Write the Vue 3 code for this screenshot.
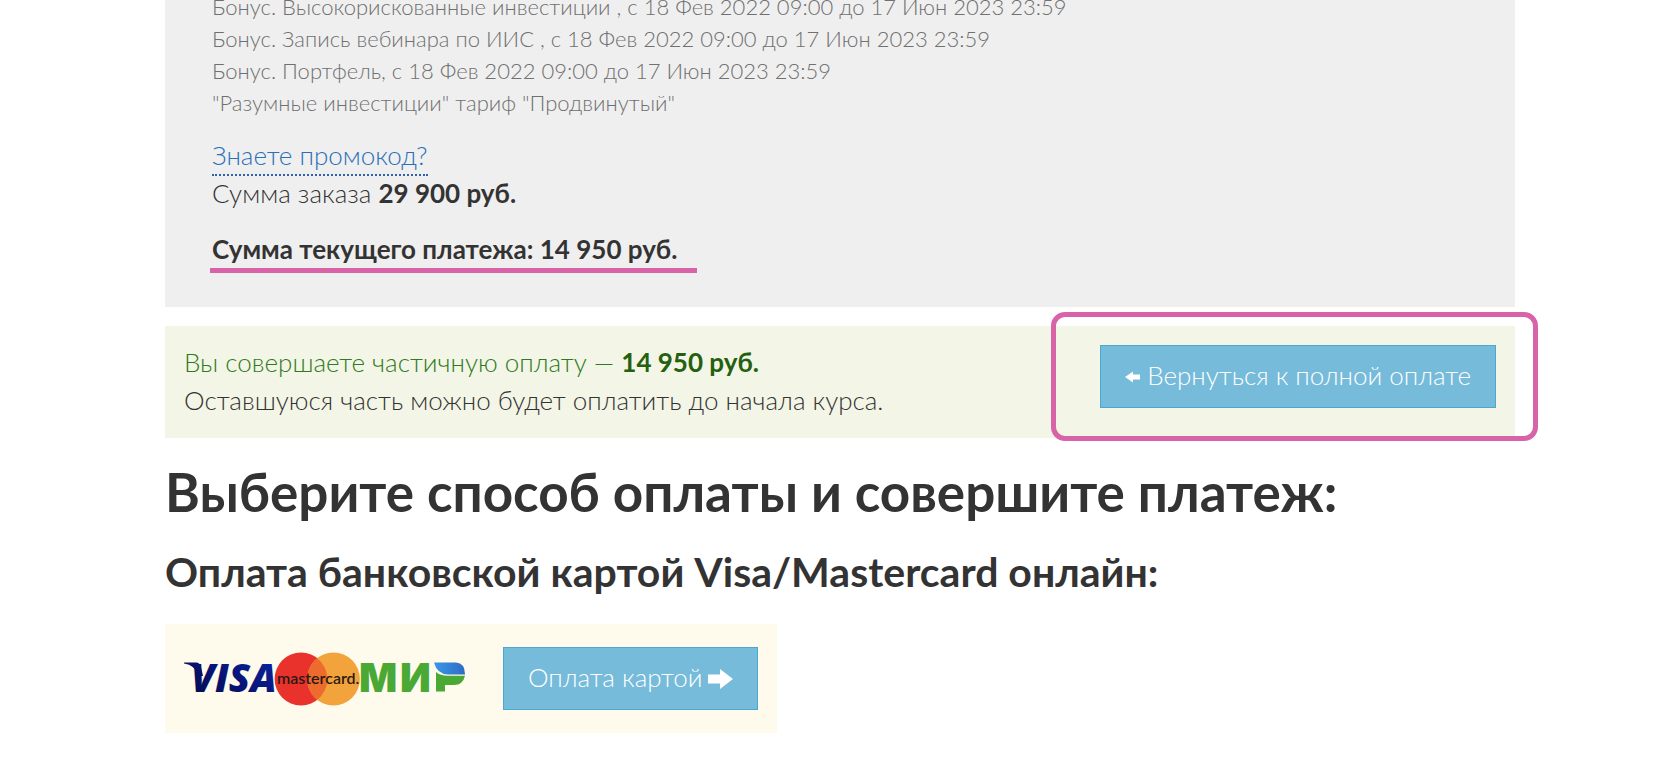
<script setup>
const items = [
  'Бонус. Высокорискованные инвестиции , с 18 Фев 2022 09:00 до 17 Июн 2023 23:59',
  'Бонус. Запись вебинара по ИИС , с 18 Фев 2022 09:00 до 17 Июн 2023 23:59',
  'Бонус. Портфель, с 18 Фев 2022 09:00 до 17 Июн 2023 23:59',
  '"Разумные инвестиции" тариф "Продвинутый"',
]
</script>

<template>
  <main class="page">
    <section class="order">
      <ul class="items">
        <li v-for="item in items" :key="item">{{ item }}</li>
      </ul>
      <a class="promo" href="#promo">Знаете промокод?</a>
      <p class="sum">Сумма заказа <b>29 900 руб.</b></p>
      <p class="current"><b>Сумма текущего платежа: 14 950 руб.</b></p>
    </section>

    <section class="notice">
      <div class="notice-text">
        <p class="partial">Вы совершаете частичную оплату — <b>14 950 руб.</b></p>
        <p>Оставшуюся часть можно будет оплатить до начала курса.</p>
      </div>
      <button class="btn btn-back" type="button">
        <svg class="back" viewBox="0 0 15 12" aria-hidden="true">
          <path d="M0 6 L8 0.500 V3.500 H15 V8.500 H8 V11.500 Z" fill="#fff" />
        </svg>
        <span>Вернуться к полной оплате</span>
      </button>
      <span class="frame"></span>
    </section>

    <h1>Выберите способ оплаты и совершите платеж:</h1>
    <h2>Оплата банковской картой Visa/Mastercard онлайн:</h2>

    <section class="card-pay">
      <svg class="logos" viewBox="0 0 282 54" role="img" aria-label="Visa, Mastercard, МИР">
        <defs>
          <linearGradient id="visa" x1="0" x2="1" y1="1" y2="0">
            <stop offset="0" stop-color="#040a4a" />
            <stop offset="0.5" stop-color="#08157a" />
            <stop offset="1" stop-color="#0a2aa8" />
          </linearGradient>
          <linearGradient id="mir" x1="0" x2="1" y1="0" y2="0">
            <stop offset="0" stop-color="#3a97e6" />
            <stop offset="1" stop-color="#2d6cc4" />
          </linearGradient>
        </defs>
        <path d="M0 10.500 H12 Q16 10.500 17 15 L19 24 L15 24 Q11 13 0 11.500 Z" fill="#08106a" />
        <text class="visa" x="7" y="39.500" fill="url(#visa)">VISA</text>
        <circle cx="117" cy="27" r="26.400" fill="#e9322c" />
        <circle cx="149.500" cy="27" r="26.400" fill="#f2a33b" />
        <path d="M133.200 6.200 A26.400 26.400 0 0 1 133.200 47.800 A26.400 26.400 0 0 1 133.200 6.200 Z" fill="#ec6b2d" />
        <text class="mc" x="93" y="32">mastercard.</text>
        <text class="mir" x="175" y="39.500">М</text>
        <text class="mir" x="216" y="39.500">И</text>
        <path d="M250 10.500 H272 Q281 11 281 22.500 H264 Q253 22 250 10.500 Z" fill="url(#mir)" />
        <path d="M252 20 Q256 23.800 264 23.800 H281 Q279 33 270 33 H261 V39.500 H252 Z" fill="#4aa834" />
      </svg>
      <button class="btn btn-pay" type="button">
        <span>Оплата картой</span>
        <svg class="next" viewBox="0 0 25 22" aria-hidden="true">
          <path d="M0 6.500 H12 V1 L25 11 L12 21 V15.500 H0 Z" fill="#fff" />
        </svg>
      </button>
    </section>
  </main>
</template>

<style>
body {
  margin: 0;
  background: #fff;
}
</style>

<style scoped>
.page {
  padding: 0 165px;
  font-family: Lato, "Noto Sans", sans-serif;
  font-size: 26px;
  font-weight: 300;
  line-height: 38px;
  color: #333;
}
p,
h1,
h2,
ul {
  margin: 0;
}
.order {
  display: flex;
  flex-direction: column;
  align-items: flex-start;
  padding: 0 47px 39px;
  background: #efefef;
}
.items {
  margin-top: -9px;
  padding: 0;
  list-style: none;
  font-size: 22px;
  line-height: 32px;
  color: #707070;
}
.promo {
  margin-top: 19px;
  padding-bottom: 2px;
  line-height: 34px;
  color: #2a70b8;
  text-decoration: none;
  border-bottom: 2px dotted #2f62ad;
}
.sum {
  margin-top: -2px;
}
.current {
  position: relative;
  margin-top: 18px;
}
.current::after {
  content: "";
  position: absolute;
  left: -2px;
  right: -20px;
  bottom: -5px;
  height: 5px;
  background: #d963a8;
}
b {
  font-weight: 700;
}
.notice {
  position: relative;
  display: flex;
  align-items: flex-start;
  justify-content: space-between;
  margin-top: 19px;
  padding: 17px 19px;
  background: #f3f5e6;
}
.notice-text {
  padding-bottom: 2px;
}
.notice .btn {
  margin-top: 2px;
}
.partial {
  color: #2f7a1c;
}
.partial b {
  color: #24600f;
}
.frame {
  position: absolute;
  top: -14px;
  right: -23px;
  bottom: -3px;
  width: 477px;
  border: 5px solid #d963a8;
  border-radius: 14px;
  pointer-events: none;
}
.btn {
  display: flex;
  align-items: center;
  gap: 6px;
  height: 63px;
  padding: 0 24px;
  border: 1px solid #4aa8d4;
  background: #76bbda;
  color: #fff;
  font: inherit;
}
.btn span {
  padding-bottom: 4px;
}
.btn-back {
  gap: 7px;
}
.back {
  width: 15px;
  height: 12px;
}
.next {
  width: 25px;
  height: 22px;
}
h1 {
  margin-top: 22px;
  font-size: 53px;
  line-height: 64px;
  font-weight: 700;
}
h2 {
  margin-top: 24px;
  font-size: 41px;
  line-height: 48px;
  font-weight: 700;
}
.card-pay {
  display: flex;
  align-items: center;
  gap: 37px;
  width: fit-content;
  margin-top: 28px;
  padding: 23px 19px;
  background: #fefaec;
}
.logos {
  width: 282px;
  height: 54px;
  overflow: visible;
}
.visa {
  font-family: "Open Sans", sans-serif;
  font-size: 39px;
  font-weight: 800;
  font-style: italic;
}
.mc {
  font-family: Lato, sans-serif;
  font-size: 16px;
  font-weight: 600;
  fill: #2a1a12;
}
.mir {
  font-family: Inter, sans-serif;
  font-size: 40px;
  font-weight: 900;
  fill: #4aa834;
}
</style>
